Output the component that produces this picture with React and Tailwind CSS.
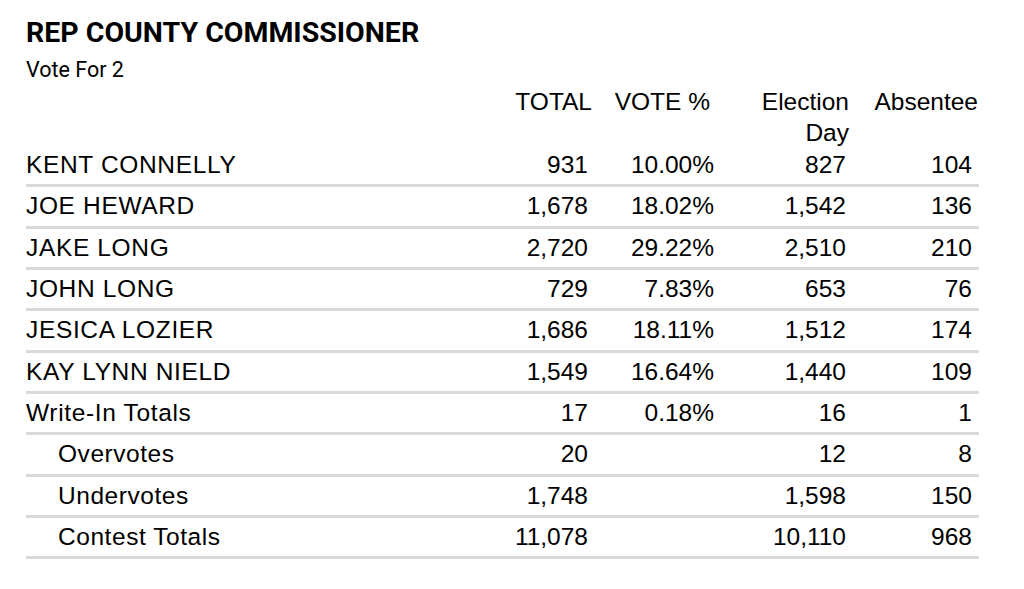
import React from "react";

const rows = [
  { name: "KENT CONNELLY", total: "931", pct: "10.00%", ed: "827", ab: "104" },
  { name: "JOE HEWARD", total: "1,678", pct: "18.02%", ed: "1,542", ab: "136" },
  { name: "JAKE LONG", total: "2,720", pct: "29.22%", ed: "2,510", ab: "210" },
  { name: "JOHN LONG", total: "729", pct: "7.83%", ed: "653", ab: "76" },
  { name: "JESICA LOZIER", total: "1,686", pct: "18.11%", ed: "1,512", ab: "174" },
  { name: "KAY LYNN NIELD", total: "1,549", pct: "16.64%", ed: "1,440", ab: "109" },
  { name: "Write-In Totals", total: "17", pct: "0.18%", ed: "16", ab: "1" },
  { name: "Overvotes", total: "20", pct: "", ed: "12", ab: "8", indent: true },
  { name: "Undervotes", total: "1,748", pct: "", ed: "1,598", ab: "150", indent: true },
  { name: "Contest Totals", total: "11,078", pct: "", ed: "10,110", ab: "968", indent: true },
];

export default function App() {
  return (
    <div className="w-[1024px] h-[589px] bg-white text-black overflow-hidden">
      <div className="pl-[26px] pr-[45px] pt-[17px]">
        <div className="font-['Roboto',sans-serif] font-bold text-[28.5px] leading-[32px]">
          REP COUNTY COMMISSIONER
        </div>
        <div className="font-['Roboto',sans-serif] text-[21.5px] leading-[24px] mt-[9px]">
          Vote For 2
        </div>
        <div className="font-['Liberation_Sans',Arial,sans-serif] text-[24.5px]">
          <div className="grid grid-cols-[1fr_123px_123px_132px_127px] h-[60.4px] leading-[31.5px] mt-[3.5px] text-right">
            <div></div>
            <div className="pr-[5px]">TOTAL</div>
            <div className="pr-[10px]">VOTE %</div>
            <div className="pr-[3px]">
              Election
              <br />
              Day
            </div>
            <div className="pr-[1px]">Absentee</div>
          </div>
          {rows.map((r) => (
            <div
              key={r.name}
              className="grid grid-cols-[1fr_123px_123px_132px_127px] h-[41.33px] leading-[38.33px] border-b-[3px] border-[#dadada]"
            >
              <div className={r.indent ? "pl-[32px] tracking-[0.55px]" : "tracking-[0.65px]"}>{r.name}</div>
              <div className="text-right pr-[9px]">{r.total}</div>
              <div className="text-right pr-[6px]">{r.pct}</div>
              <div className="text-right pr-[6px]">{r.ed}</div>
              <div className="text-right pr-[7px]">{r.ab}</div>
            </div>
          ))}
        </div>
      </div>
    </div>
  );
}
